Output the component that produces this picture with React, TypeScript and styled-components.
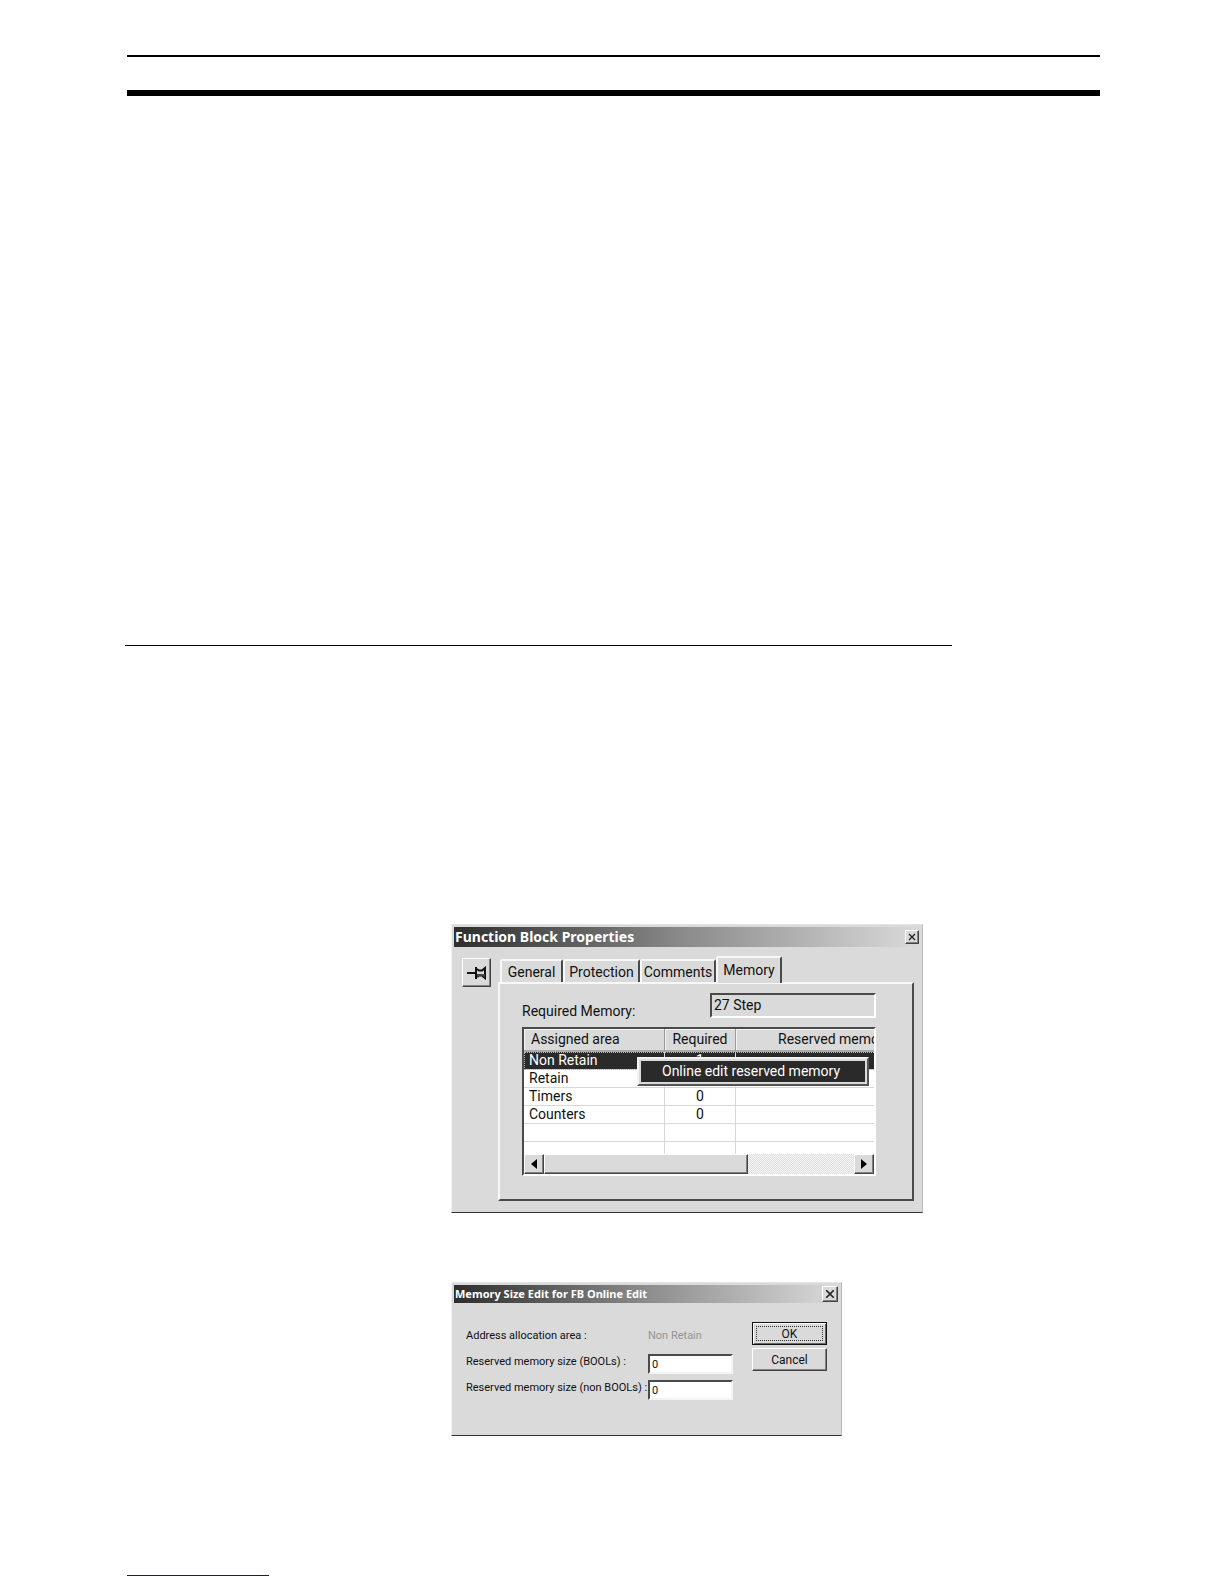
import React from "react";
import styled, { createGlobalStyle, css } from "styled-components";

const face = "#dadada";
const dark = "#4a4a4a";
const ui = `Roboto, "Liberation Sans", sans-serif`;
const caption = `"Noto Sans", "Open Sans", sans-serif`;

const GlobalStyle = createGlobalStyle`
  *, *::before, *::after { box-sizing: border-box; }
  body { margin: 0; background: #fff; color: #111; font-family: ${ui}; }
  button, input { font: inherit; color: inherit; border-radius: 0; margin: 0; }
`;

const raised = css`
  border: 1px solid;
  border-color: #fff #444 #444 #fff;
  box-shadow: inset -1px -1px 0 #808080;
`;

const Page = styled.main`
  padding: 55px 124px 8px 127px;
`;

const HeaderRules = styled.header`
  height: 41px;
  border-top: 2px solid #000;
  border-bottom: 6px solid #000;
`;

const SectionRule = styled.hr`
  width: 85%;
  height: 1px;
  margin: 549px 0 278px -2px;
  border: 0;
  background: #000;
`;

const Figures = styled.div`
  display: flex;
  flex-direction: column;
  align-items: flex-start;
  gap: 69px;
  margin-left: 324px;
`;

const FooterRule = styled.hr`
  width: 142px;
  height: 1px;
  margin: 139px 0 0;
  border: 0;
  background: #14147c;
`;

const Window = styled.section<{ $width: number; $size: number }>`
  width: ${(p) => p.$width}px;
  max-width: 100%;
  padding: 2px;
  background: ${face};
  border: 1px solid;
  border-color: #e4e4e4 #b8b8b8 #333 #f0f0f0;
  font-size: ${(p) => p.$size}px;
`;

const TitleBar = styled.header<{ $height: number }>`
  display: flex;
  align-items: center;
  justify-content: space-between;
  height: ${(p) => p.$height}px;
  padding-right: 1px;
  background: linear-gradient(90deg, #2e2e2e, #8c8c8c 50%, #dadada);
`;

const Title = styled.h2<{ $size: number }>`
  margin: 0;
  padding-left: 1px;
  color: #fff;
  font: bold ${(p) => p.$size}px/18px ${caption};
  white-space: nowrap;
`;

const CloseButton = styled.button<{ $size: number }>`
  ${raised}
  display: grid;
  place-items: center;
  width: ${(p) => p.$size}px;
  height: ${(p) => p.$size}px;
  padding: 0;
  background: ${face};
`;

const PropertiesBody = styled.div`
  display: flex;
  align-items: flex-start;
  gap: 7px;
  padding: 9px 6px 9px 8px;
`;

const PinButton = styled.button`
  ${raised}
  display: grid;
  place-items: center;
  flex: none;
  width: 29px;
  height: 29px;
  margin-top: 2px;
  padding: 0;
  background: ${face};
`;

const Tabs = styled.div`
  flex: 1;
  min-width: 0;
`;

const TabList = styled.div`
  display: flex;
  align-items: flex-end;
  padding-left: 2px;
`;

const Tab = styled.button<{ $width: number; $active?: boolean }>`
  width: ${(p) => p.$width}px;
  height: ${(p) => (p.$active ? 27 : 23)}px;
  margin-bottom: ${(p) => (p.$active ? -1 : 0)}px;
  padding: 0 0 ${(p) => (p.$active ? 1 : 0)}px;
  background: ${face};
  border: solid;
  border-width: 2px 2px 0 2px;
  border-color: #f8f8f8 ${dark} transparent #f8f8f8;
  border-radius: 2px 2px 0 0;
  white-space: nowrap;
  position: relative;
`;

const TabPanel = styled.div`
  height: 219px;
  padding: 9px 36px 0 22px;
  border: 2px solid;
  border-color: #f8f8f8 ${dark} ${dark} #f8f8f8;
`;

const MemoryLine = styled.div`
  display: flex;
  justify-content: space-between;
  margin-bottom: 8px;
`;

const MemoryLabel = styled.label`
  padding-top: 10px;
  line-height: 16px;
`;

const MemoryField = styled.input`
  width: 166px;
  height: 25px;
  padding: 0 2px 2px;
  background: ${face};
  border: 2px solid;
  border-color: ${dark} #fff #fff ${dark};
`;

const ListBox = styled.div`
  position: relative;
  height: 149px;
  overflow: hidden;
  display: flex;
  flex-direction: column;
  background: #fff;
  border: 2px solid;
  border-color: ${dark} #fff #fff ${dark};
`;

const ListView = styled.div`
  flex: 1;
  min-height: 0;
  overflow: hidden;
`;

const List = styled.table`
  width: 420px;
  table-layout: fixed;
  border-collapse: separate;
  border-spacing: 0;
`;

const Head = styled.th<{ $align?: string; $pad: number }>`
  height: 23px;
  padding: 0 0 1px ${(p) => p.$pad}px;
  background: ${face};
  border-right: 1px solid #999;
  border-bottom: 2px solid #aaa;
  box-shadow: inset 1px 1px 0 #f4f4f4;
  font-weight: normal;
  text-align: ${(p) => p.$align ?? "left"};
  white-space: nowrap;
`;

const Row = styled.tr<{ $selected: boolean }>`
  ${(p) =>
    p.$selected &&
    css`
      color: #fff;
      background: #2a2a2a;
      outline: 1px dotted #bbb;
      outline-offset: -1px;
    `}
`;

const Cell = styled.td<{ $center?: boolean }>`
  height: 18px;
  padding: 0 5px;
  line-height: 17px;
  text-align: ${(p) => (p.$center ? "center" : "left")};
  border-right: 1px solid #d8d8d8;
  border-bottom: 1px solid #d8d8d8;
`;

const ScrollBar = styled.div`
  display: flex;
  flex: none;
  height: 20px;
  background: repeating-conic-gradient(#dedede 0 25%, #f6f6f6 0 50%) 0 0 / 2px 2px;
`;

const ScrollButton = styled.button`
  ${raised}
  display: grid;
  place-items: center;
  width: 20px;
  padding: 0;
  background: ${face};
`;

const ScrollThumb = styled.div`
  ${raised}
  width: 204px;
  margin-right: auto;
  background: ${face};
`;

const ContextMenu = styled.div`
  position: absolute;
  left: 113px;
  top: 28px;
  width: 232px;
  padding: 2px;
  background: ${face};
  border: 2px solid;
  border-color: #f4f4f4 #555 #555 #f4f4f4;
`;

const MenuItem = styled.button`
  display: block;
  width: 100%;
  height: 21px;
  padding: 0 0 1px 21px;
  color: #fff;
  background: #2a2a2a;
  border: 0;
  text-align: left;
  white-space: nowrap;
`;

const EditBody = styled.form`
  display: flex;
  justify-content: space-between;
  height: 130px;
  padding: 19px 12px 0 12px;
`;

const Fields = styled.div`
  display: grid;
  grid-template-columns: 182px 85px;
  grid-template-rows: 26px 26px 26px;
  align-items: center;
`;

const FieldLabel = styled.label`
  white-space: nowrap;
`;

const Area = styled.output`
  color: #949494;
`;

const SizeInput = styled.input`
  align-self: end;
  width: 100%;
  height: 20px;
  padding: 0 2px;
  background: #fff;
  border: 2px solid;
  border-color: ${dark} #f4f4f4 #f4f4f4 ${dark};
`;

const Buttons = styled.div`
  display: flex;
  flex-direction: column;
  gap: 3px;
`;

const PushButton = styled.button<{ $default?: boolean }>`
  ${raised}
  width: 75px;
  height: 23px;
  padding: 0;
  background: ${face};
  font-size: 12px;
  ${(p) =>
    p.$default &&
    css`
      border-color: #111;
      box-shadow: inset 1px 1px 0 #fff, inset -1px -1px 0 #666;
      outline: 1px dotted #333;
      outline-offset: -5px;
    `}
`;

const Cross = ({ size }: { size: number }) => (
  <svg width={size} height={size} viewBox="0 0 8 8" aria-hidden="true">
    <path d="M1 1L7 7M7 1L1 7" stroke="#222" strokeWidth="1.4" />
  </svg>
);

const Pin = () => (
  <svg width="20" height="14" viewBox="0 0 20 14" aria-hidden="true">
    <path d="M0 7H8" stroke="#111" strokeWidth="2" />
    <path
      d="M9 1V13M10 3L12 4.500H15L18 2V12L15 9.500H12L10 11"
      fill="none"
      stroke="#111"
      strokeWidth="2"
    />
    <path d="M10 8H18V11L15 10H12L10 11Z" fill="#444" />
  </svg>
);

const Arrow = ({ right }: { right?: boolean }) => (
  <svg width="6" height="10" viewBox="0 0 6 10" aria-hidden="true">
    <path d={right ? "M0 0L6 5L0 10Z" : "M6 0L0 5L6 10Z"} fill="#000" />
  </svg>
);

const tabs = [
  { name: "General", width: 63 },
  { name: "Protection", width: 77 },
  { name: "Comments", width: 76 },
  { name: "Memory", width: 66 },
];

const areas = [
  { name: "Non Retain", required: "1" },
  { name: "Retain", required: "" },
  { name: "Timers", required: "0" },
  { name: "Counters", required: "0" },
  { name: "", required: "" },
  { name: "", required: "" },
];

export default function App() {
  return (
    <Page>
      <GlobalStyle />
      <HeaderRules />
      <SectionRule />
      <Figures>
        <Window $width={472} $size={14}>
          <TitleBar $height={20}>
            <Title $size={14}>Function Block Properties</Title>
            <CloseButton $size={14} aria-label="Close">
              <Cross size={8} />
            </CloseButton>
          </TitleBar>
          <PropertiesBody>
            <PinButton aria-label="Pin">
              <Pin />
            </PinButton>
            <Tabs>
              <TabList role="tablist">
                {tabs.map((t) => (
                  <Tab
                    key={t.name}
                    role="tab"
                    aria-selected={t.name === "Memory"}
                    $width={t.width}
                    $active={t.name === "Memory"}
                  >
                    {t.name}
                  </Tab>
                ))}
              </TabList>
              <TabPanel role="tabpanel">
                <MemoryLine>
                  <MemoryLabel htmlFor="required">Required Memory:</MemoryLabel>
                  <MemoryField id="required" readOnly value="27 Step" />
                </MemoryLine>
                <ListBox>
                  <ListView>
                    <List>
                      <colgroup>
                        <col width="141" />
                        <col width="71" />
                        <col />
                      </colgroup>
                      <thead>
                        <tr>
                          <Head $pad={7}>Assigned area</Head>
                          <Head $pad={0} $align="center">Required</Head>
                          <Head $pad={42}>Reserved memory</Head>
                        </tr>
                      </thead>
                      <tbody>
                        {areas.map((a, i) => (
                          <Row key={i} $selected={i === 0}>
                            <Cell>{a.name}</Cell>
                            <Cell $center>{a.required}</Cell>
                            <Cell />
                          </Row>
                        ))}
                      </tbody>
                    </List>
                  </ListView>
                  <ScrollBar>
                    <ScrollButton aria-label="Scroll left">
                      <Arrow />
                    </ScrollButton>
                    <ScrollThumb />
                    <ScrollButton aria-label="Scroll right">
                      <Arrow right />
                    </ScrollButton>
                  </ScrollBar>
                  <ContextMenu role="menu">
                    <MenuItem role="menuitem">Online edit reserved memory</MenuItem>
                  </ContextMenu>
                </ListBox>
              </TabPanel>
            </Tabs>
          </PropertiesBody>
        </Window>

        <Window $width={391} $size={11}>
          <TitleBar $height={18}>
            <Title $size={11}>Memory Size Edit for FB Online Edit</Title>
            <CloseButton $size={16} aria-label="Close">
              <Cross size={10} />
            </CloseButton>
          </TitleBar>
          <EditBody>
            <Fields>
              <FieldLabel htmlFor="area">Address allocation area :</FieldLabel>
              <Area id="area">Non Retain</Area>
              <FieldLabel htmlFor="bools">Reserved memory size (BOOLs) :</FieldLabel>
              <SizeInput id="bools" defaultValue="0" />
              <FieldLabel htmlFor="nonbools">Reserved memory size (non BOOLs) :</FieldLabel>
              <SizeInput id="nonbools" defaultValue="0" />
            </Fields>
            <Buttons>
              <PushButton type="button" $default>OK</PushButton>
              <PushButton type="button">Cancel</PushButton>
            </Buttons>
          </EditBody>
        </Window>
      </Figures>
      <FooterRule />
    </Page>
  );
}
